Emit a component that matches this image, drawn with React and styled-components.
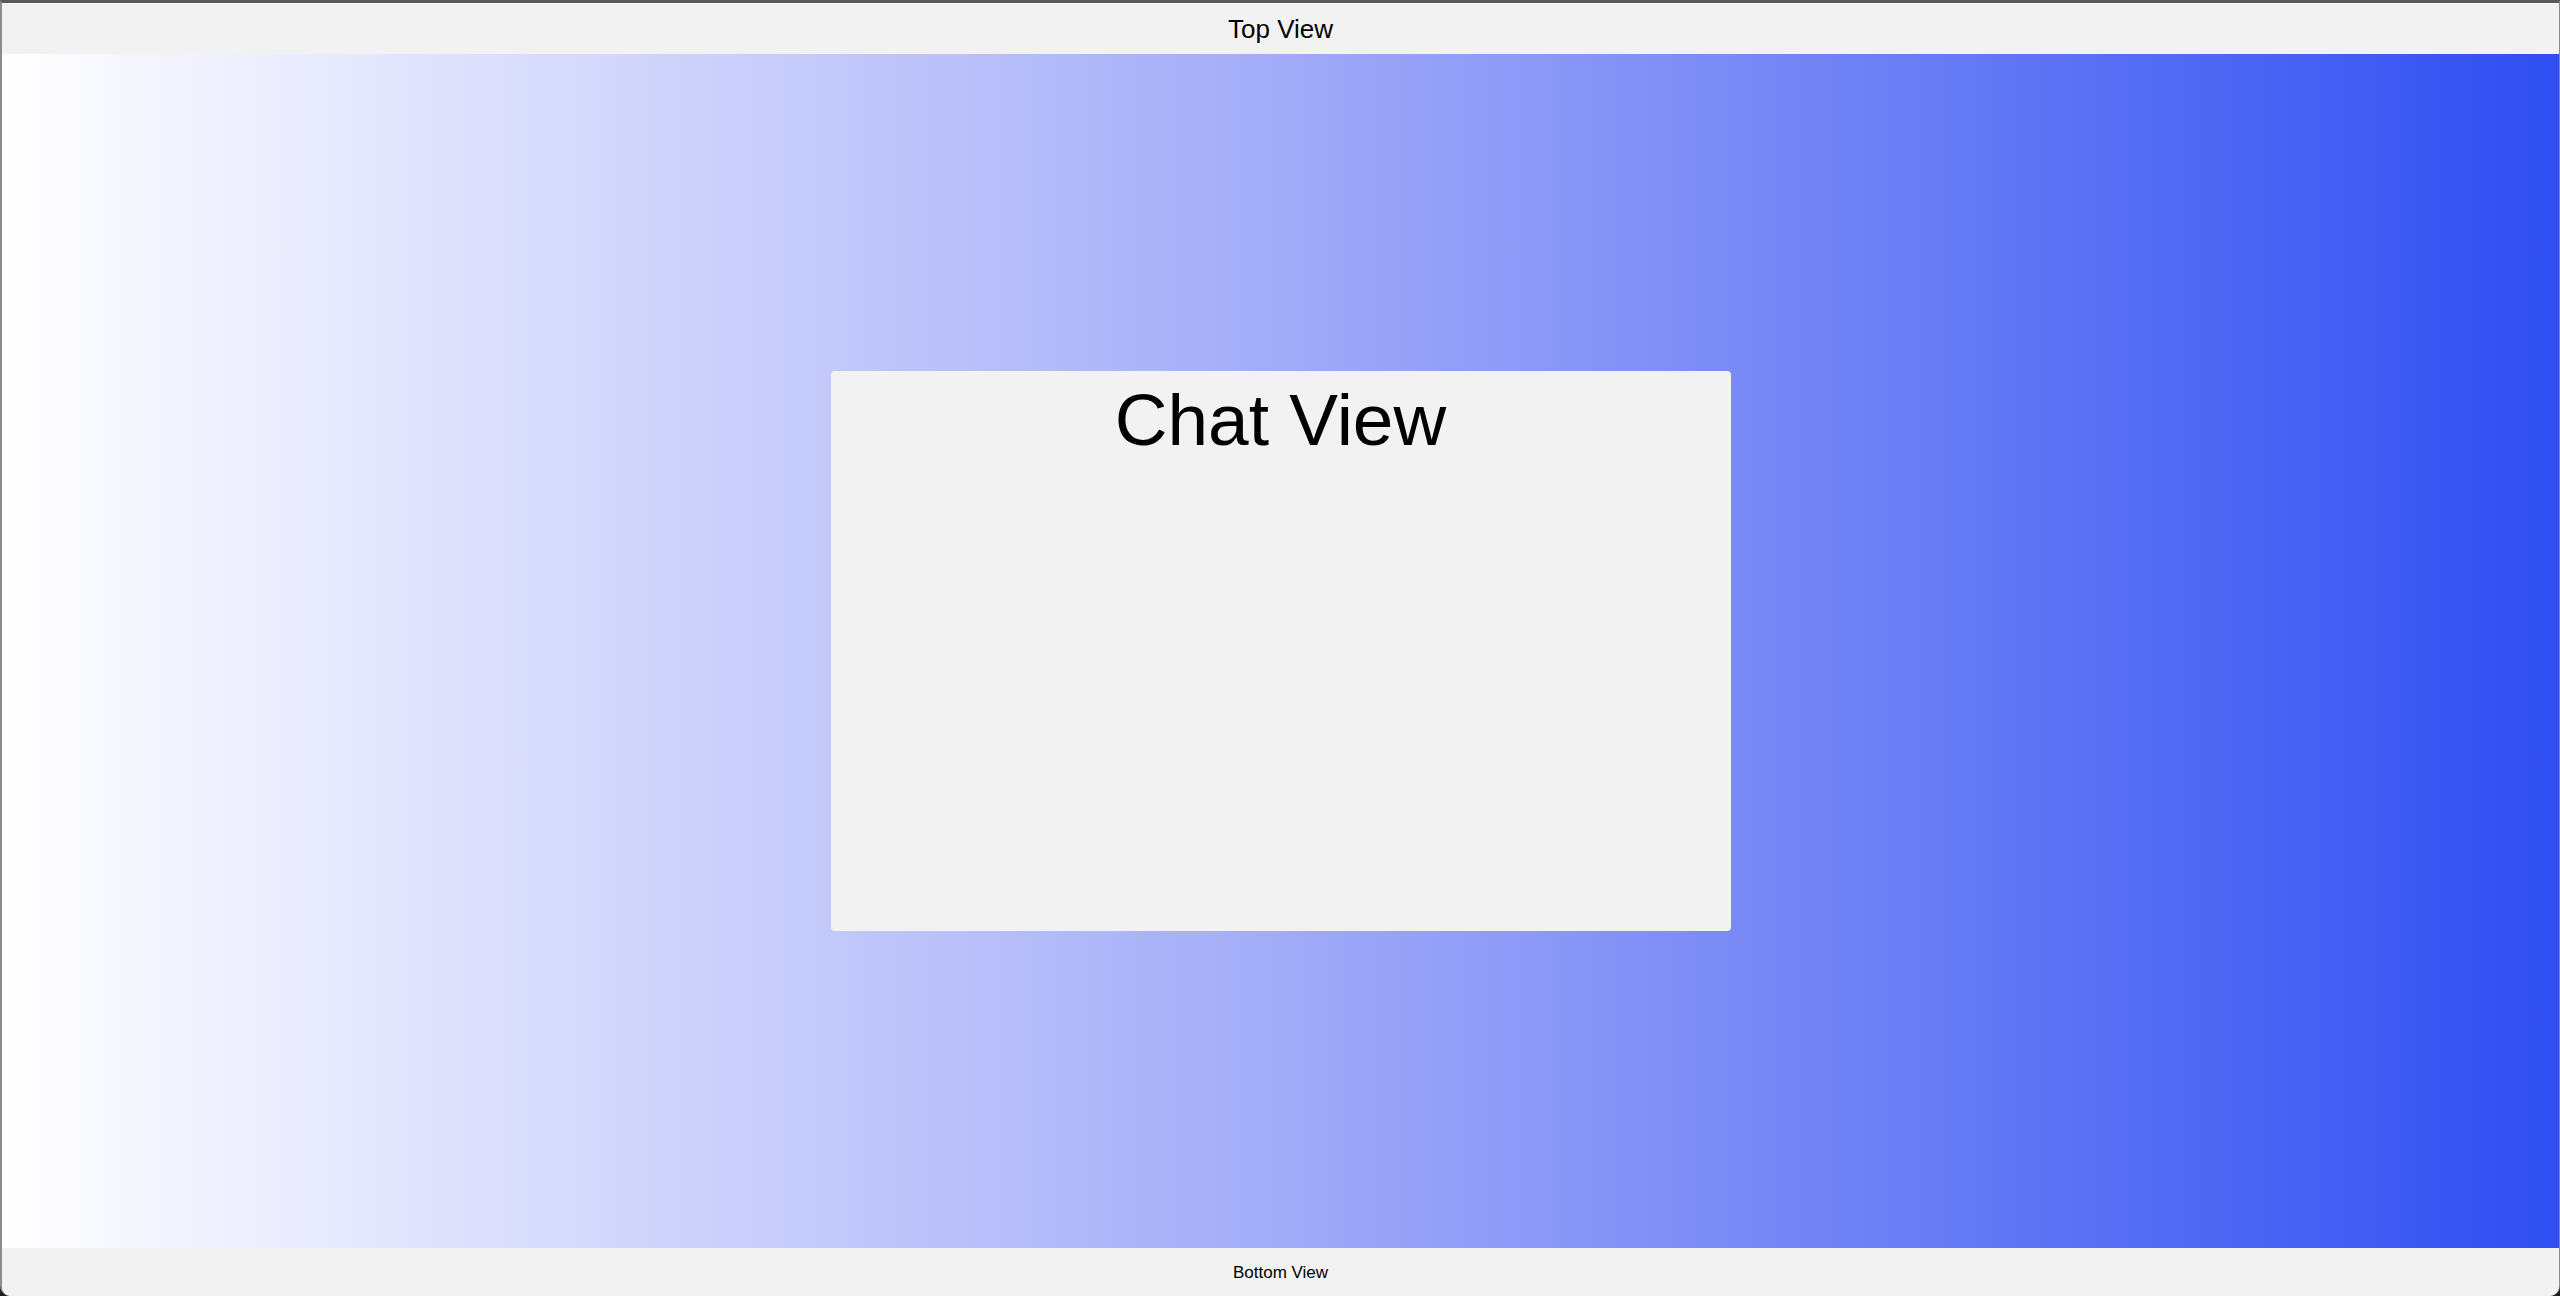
import React from "react";
import styled, { createGlobalStyle } from "styled-components";

const GlobalStyle = createGlobalStyle`
  html, body {
    margin: 0;
    padding: 0;
    background: #1e1e1e;
  }
  body {
    font-family: "Liberation Sans", Arial, sans-serif;
  }
`;

const Window = styled.div`
  height: 1296px;
  box-sizing: border-box;
  display: flex;
  flex-direction: column;
  border-top: 3px solid #5a5a5a;
  border-left: 2px solid #8c8c8c;
  border-right: 1px solid #8c8c8c;
  border-radius: 0 0 10px 10px;
  overflow: hidden;
  background: #f2f2f2;
`;

const Bar = styled.div`
  flex: 0 0 ${(p) => p.height}px;
  display: flex;
  align-items: center;
  justify-content: center;
  background: #f2f2f2;
  color: #000;
  font-size: ${(p) => p.size}px;
  padding-top: ${(p) => p.shift || 0}px;
  box-sizing: border-box;
  border-top: ${(p) => (p.top ? "1px solid #fafafa" : "none")};
`;

const Stage = styled.div`
  flex: 1;
  display: flex;
  align-items: center;
  justify-content: center;
  background: linear-gradient(to right, #ffffff 0%, #a2abf8 50%, #2f4ef2 100%);
`;

const ChatPanel = styled.div`
  width: 900px;
  height: 560px;
  box-sizing: border-box;
  background: #f2f2f2;
  border-radius: 4px;
  display: flex;
  flex-direction: column;
  align-items: center;
  padding-top: 7px;
`;

const ChatTitle = styled.div`
  font-size: 73px;
  color: #000;
  line-height: 1.15;
`;

export default function App() {
  return (
    <>
      <GlobalStyle />
      <Window>
        <Bar height={51} size={26} top>
          Top View
        </Bar>
        <Stage>
          <ChatPanel>
            <ChatTitle>Chat View</ChatTitle>
          </ChatPanel>
        </Stage>
        <Bar height={48} size={17} shift={2}>
          Bottom View
        </Bar>
      </Window>
    </>
  );
}
